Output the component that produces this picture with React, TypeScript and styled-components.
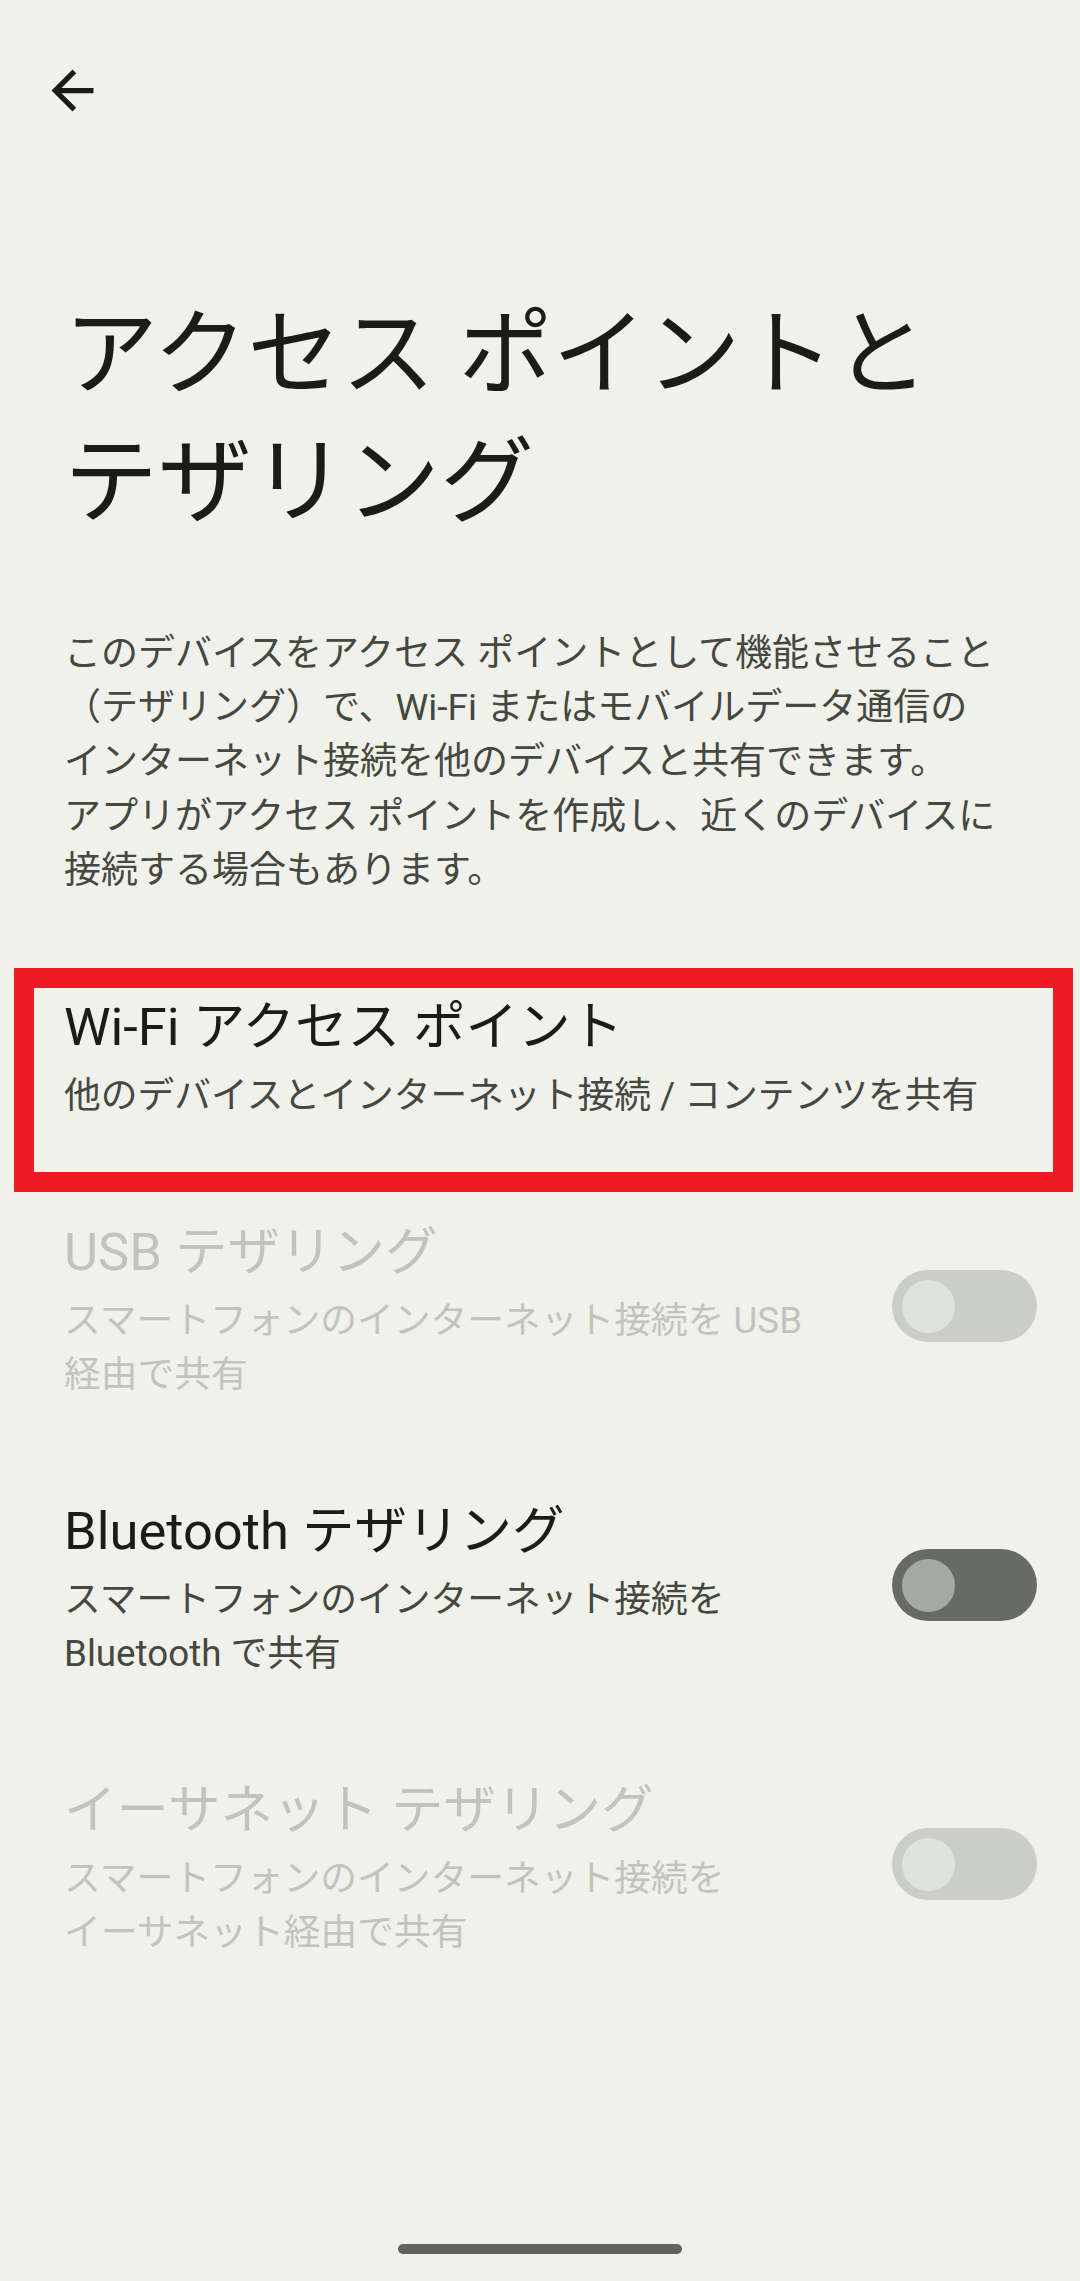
import React, {FC} from 'react';
import styled, {createGlobalStyle} from 'styled-components';

const GlobalStyle = createGlobalStyle`
  html, body {
    margin: 0;
    padding: 0;
    background: #f0f1eb;
  }
  body {
    font-family: Roboto, "Noto Sans CJK JP", "Noto Sans", sans-serif;
    -webkit-font-smoothing: antialiased;
  }
`

const Page = styled.div`
  width: 1080px;
  min-height: 2281px;
  display: flex;
  flex-direction: column;
  background: #f0f1eb;
  box-sizing: border-box;
`

const TopBar = styled.div`
  height: 150px;
  padding: 59px 0 0 41px;
  box-sizing: border-box;
`

const BackBtn = styled.button`
  width: 63px;
  height: 63px;
  padding: 0;
  border: none;
  background: none;
  color: #1b1c18;
  display: flex;
  svg {
    width: 63px;
    height: 63px;
  }
`

const Title = styled.h1`
  margin: 141px 0 0;
  padding: 0 64px;
  font-size: 94px;
  line-height: 128px;
  font-weight: 400;
  color: #1b1c18;
`

const Description = styled.p`
  margin: 80px 0 0;
  padding: 0 64px;
  font-size: 37px;
  line-height: 54.2px;
  color: #45483f;
  white-space: nowrap;
`

const List = styled.div`
  margin-top: 48px;
  display: flex;
  flex-direction: column;
`

const Row = styled.div<{$disabled?: boolean}>`
  position: relative;
  display: flex;
  align-items: center;
  padding: 48.5px 43px 48.5px 64px;
  color: ${p => (p.$disabled ? '#c2c4bc' : '#1b1c18')};
`

const RowText = styled.div`
  flex: 1;
  min-width: 0;
`

const RowTitle = styled.div`
  font-size: 52.5px;
  line-height: 64px;
  white-space: nowrap;
`

const RowSummary = styled.div<{$disabled?: boolean}>`
  margin-top: 10px;
  font-size: 36.75px;
  line-height: 54px;
  color: ${p => (p.$disabled ? '#c2c4bc' : '#45483f')};
  white-space: nowrap;
`

const Highlight = styled.div`
  position: absolute;
  top: 21.5px;
  left: 14px;
  right: 7px;
  bottom: -20.5px;
  border: 20px solid #ed1c24;
  pointer-events: none;
  z-index: 2;
`

const Track = styled.div<{$disabled?: boolean}>`
  width: 145px;
  height: 72px;
  margin-bottom: 9px;
  border-radius: 36px;
  background: ${p => (p.$disabled ? '#cbcec7' : '#676b63')};
  display: flex;
  align-items: center;
  padding-left: 10px;
  box-sizing: border-box;
  flex-shrink: 0;
`

const Thumb = styled.div<{$disabled?: boolean}>`
  width: 53px;
  height: 53px;
  border-radius: 50%;
  background: ${p => (p.$disabled ? '#dfe3dc' : '#a6aaa3')};
`

const HomeBar = styled.div`
  margin: auto auto 27px;
  width: 284px;
  height: 10px;
  border-radius: 5px;
  background: #626260;
`

type Item = {
  title: string;
  summary: string[];
  disabled?: boolean;
  toggle?: boolean;
  highlight?: boolean;
};

const items: Item[] = [
  {title: 'Wi-Fi アクセス ポイント', summary: ['他のデバイスとインターネット接続 / コンテンツを共有'], highlight: true},
  {title: 'USB テザリング', summary: ['スマートフォンのインターネット接続を USB', '経由で共有'], disabled: true, toggle: true},
  {title: 'Bluetooth テザリング', summary: ['スマートフォンのインターネット接続を', 'Bluetooth で共有'], toggle: true},
  {title: 'イーサネット テザリング', summary: ['スマートフォンのインターネット接続を', 'イーサネット経由で共有'], disabled: true, toggle: true},
];

const description = [
  'このデバイスをアクセス ポイントとして機能させること',
  '（テザリング）で、Wi-Fi またはモバイルデータ通信の',
  'インターネット接続を他のデバイスと共有できます。',
  'アプリがアクセス ポイントを作成し、近くのデバイスに',
  '接続する場合もあります。',
];

const App: FC = () => {
  return (
    <Page>
      <GlobalStyle />
      <TopBar>
        <BackBtn aria-label="戻る">
          <svg viewBox="0 0 24 24" fill="currentColor">
            <path d="M20 11H7.83l5.59-5.59L12 4l-8 8 8 8 1.41-1.41L7.83 13H20v-2z" />
          </svg>
        </BackBtn>
      </TopBar>

      <Title>
        アクセス ポイントと
        <br />
        テザリング
      </Title>

      <Description>
        {description.map((line, i) => (
          <React.Fragment key={i}>
            {line}
            {i < description.length - 1 && <br />}
          </React.Fragment>
        ))}
      </Description>

      <List>
        {items.map(item => (
          <Row key={item.title} $disabled={item.disabled}>
            <RowText>
              <RowTitle>{item.title}</RowTitle>
              <RowSummary $disabled={item.disabled}>
                {item.summary.map((line, i) => (
                  <div key={i}>{line}</div>
                ))}
              </RowSummary>
            </RowText>
            {item.toggle && (
              <Track $disabled={item.disabled}>
                <Thumb $disabled={item.disabled} />
              </Track>
            )}
            {item.highlight && <Highlight />}
          </Row>
        ))}
      </List>

      <HomeBar />
    </Page>
  );
};

export default App;
